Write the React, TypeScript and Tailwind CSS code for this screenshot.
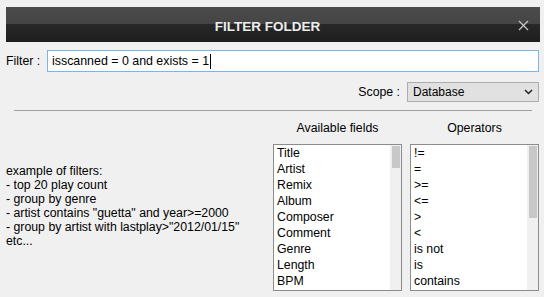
import React from "react";

const FIELDS = ["Title", "Artist", "Remix", "Album", "Composer", "Comment", "Genre", "Length", "BPM"];
const OPERATORS = ["!=", "=", ">=", "<=", ">", "<", "is not", "is", "contains"];

const EXAMPLES = [
  "example of filters:",
  "- top 20 play count",
  "- group by genre",
  '- artist contains "guetta" and year>=2000',
  '- group by artist with lastplay>"2012/01/15"',
  "etc...",
];

function ListBox({ title, items, thumb }: { title: string; items: string[]; thumb: string }) {
  return (
    <div className="w-[129px] flex flex-col">
      <div className="h-[16px] leading-[16px] text-center mb-[8px]">{title}</div>
      <div className="h-[147px] border border-[#8c8c8c] bg-white flex">
        <div className="flex-1 pl-[3px]">
          {items.map(i => (
            <div key={i} className="h-[16px] leading-[16px]">{i}</div>
          ))}
        </div>
        <div className="w-[11px] bg-[#f0f0f0] flex justify-center pt-[1px]">
          <div className={`w-[8px] bg-[#c8c8c8] ${thumb}`} />
        </div>
      </div>
    </div>
  );
}

export default function App() {
  return (
    <div className="w-[544px] h-[297px] bg-[#f0f0f0] pt-[7px] pl-[6px] pr-[4px] flex flex-col text-black text-[12.3px] [font-family:'Liberation_Sans',Arial,sans-serif] overflow-hidden">
      {/* title bar */}
      <div className="h-[35px] shrink-0 flex items-center bg-[linear-gradient(#4b4b4b_0%,#454545_48%,#282828_49%,#1e1e1e_100%)]">
        <div className="flex-1" />
        <div className="text-[13.5px] font-bold text-[#ececec] pt-[5px]">FILTER FOLDER</div>
        <div className="flex-1 flex justify-end pr-[11px] pt-[2px]">
          <svg width="11" height="11" viewBox="0 0 11 11">
            <path d="M1 1L10 10M10 1L1 10" stroke="#c4c4c4" strokeWidth="1.3" />
          </svg>
        </div>
      </div>

      {/* filter row */}
      <div className="mt-[8px] flex items-center">
        <div className="w-[41px]">Filter :</div>
        <div className="flex-1 mr-[1px] h-[22px] border border-[#7eb4ea] bg-white px-[4px] flex items-center text-[12.4px]">
          <span>isscanned = 0 and exists = 1</span>
          <span className="inline-block w-px h-[15px] bg-black ml-px" />
        </div>
      </div>

      {/* scope row */}
      <div className="mt-[10px] flex justify-end items-center mr-[1px]">
        <div className="mr-[7px]">Scope :</div>
        <div className="w-[132px] h-[20px] border border-[#adadad] bg-[#e1e1e1] flex items-center justify-between pl-[5px] pr-[5px] text-[12px]">
          <span>Database</span>
          <svg width="9" height="6" viewBox="0 0 9 6">
            <path d="M1 1L4.5 4.5L8 1" stroke="#222" strokeWidth="1.5" fill="none" />
          </svg>
        </div>
      </div>

      {/* separator */}
      <div className="mt-[8px] ml-[8px] w-[518px] h-px bg-[#a0a0a0]" />

      {/* bottom */}
      <div className="mt-[9px] flex items-center mr-[1px]">
        <div className="flex-1 leading-[14px]">
          {EXAMPLES.map(e => (
            <div key={e}>{e}</div>
          ))}
        </div>
        <ListBox title="Available fields" items={FIELDS} thumb="h-[22px]" />
        <div className="w-[8px]" />
        <ListBox title="Operators" items={OPERATORS} thumb="h-[72px]" />
      </div>
    </div>
  );
}
